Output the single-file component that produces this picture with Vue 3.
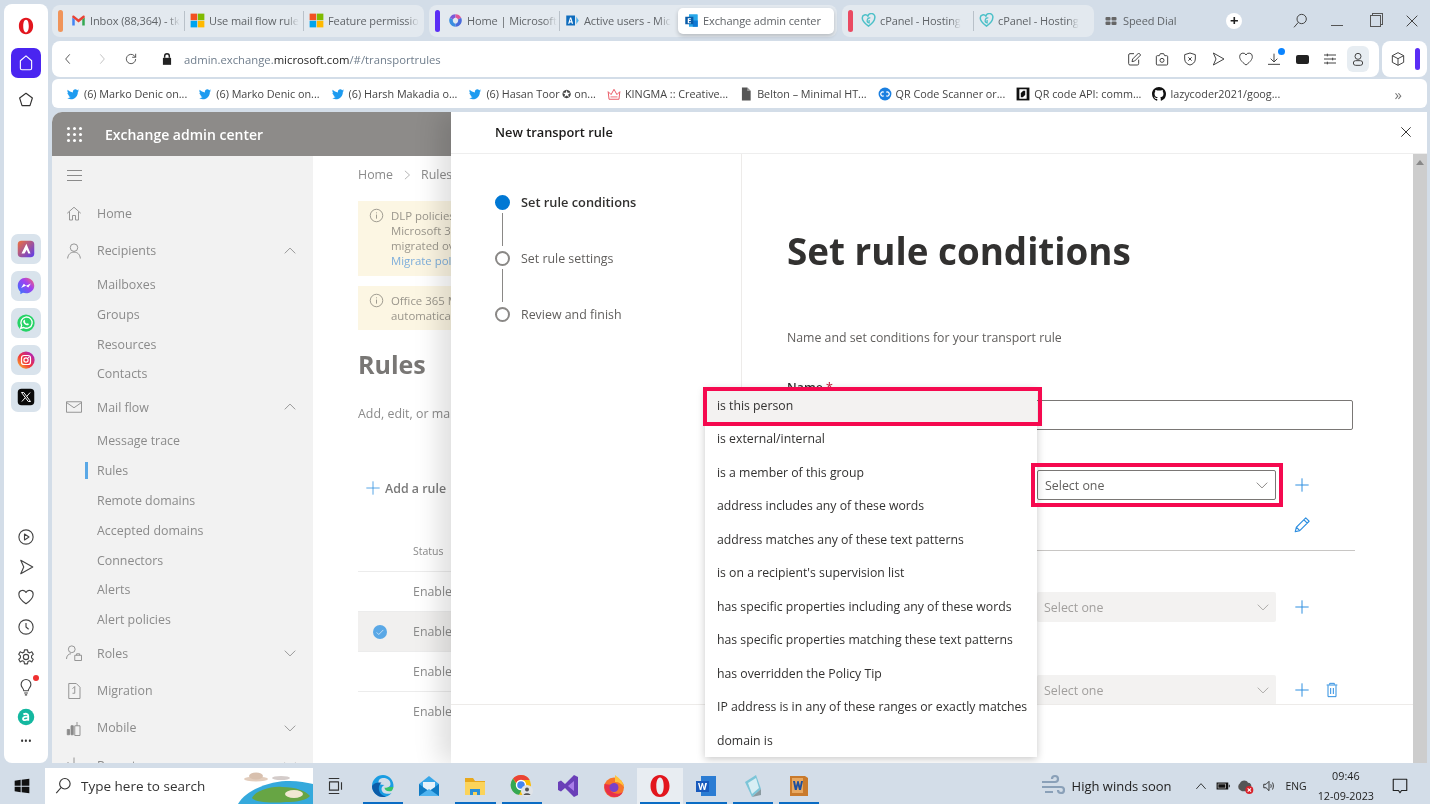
<script setup>
const icons = {
  gmail: '<path fill="#4285f4" d="M2 20V7l4 3v10z"/><path fill="#34a853" d="M18 20V10l4-3v13z"/><path fill="#ea4335" d="M6 10 2 7V5.500C2 4 4 3.500 5 4.300L12 10l7-5.700C20 3.500 22 4 22 5.500V7l-10 8z"/>',
  ms: '<path fill="#f25022" d="M1 1h10.500v10.500H1z"/><path fill="#7fba00" d="M12.500 1H23v10.500H12.500z"/><path fill="#00a4ef" d="M1 12.500h10.500V23H1z"/><path fill="#ffb900" d="M12.500 12.500H23V23H12.500z"/>',
  m365: '<path fill="#7a5ad8" d="M12 2a10 10 0 0 0-9 5.500l5 3A5 5 0 0 1 12 7z"/><path fill="#3b8ee0" d="M3 7.500A10 10 0 0 0 12 22v-5a5 5 0 0 1-4-6.500z"/><path fill="#e0569a" d="M12 2a10 10 0 0 1 9 5.500l-5 3A5 5 0 0 0 12 7z"/><path fill="#4a6bdc" d="M21 7.500A10 10 0 0 1 12 22v-5a5 5 0 0 0 4-6.500z"/>',
  azure: '<path fill="#0f6cbd" d="M2 4h14v16H2z"/><path fill="#fff" d="M8 7h2l3 10h-2l-.6-2H7.600L7 17H5zm0 6h2l-1-3.500z"/><path fill="#50b0e8" d="M18 6l4 6-4 6z"/>',
  exchange: '<path fill="#28a8ea" d="M8 2h13a1 1 0 0 1 1 1v18a1 1 0 0 1-1 1H8z"/><path fill="#0f78d4" d="M14 12h8v10h-8z"/><path fill="#0a5ca8" d="M2 6h13v12H2z"/><path fill="#fff" d="M6 8.500h5v1.500H8v1.300h2.800v1.400H8V15h3.200v1.400H6z"/>',
  cpanel: '<path fill="none" stroke="#4cc0c8" stroke-width="2.400" d="M12 21C5 16 2 12 2 8a5 5 0 0 1 9-3 5.500 5.500 0 0 1 11 3c0 4-3 8-10 13z"/><path fill="none" stroke="#4cc0c8" stroke-width="2" d="M15 8a4 4 0 1 0-2 8V11"/>',
  speed: '<rect x="1" y="4" width="10" height="7" rx="2"/><rect x="13" y="4" width="10" height="7" rx="2"/><rect x="1" y="13" width="10" height="7" rx="2"/><rect x="13" y="13" width="10" height="7" rx="2"/>',
  twitter: '<path fill="#1d9bf0" d="M22.460 6c-.770.350-1.600.580-2.460.690.880-.530 1.560-1.370 1.880-2.380-.830.500-1.750.850-2.720 1.050C18.370 4.500 17.260 4 16 4c-2.350 0-4.270 1.920-4.270 4.290 0 .340.040.670.110.980C8.280 9.090 5.110 7.380 3 4.790c-.370.630-.580 1.370-.580 2.150 0 1.490.750 2.810 1.910 3.560-.710 0-1.370-.200-1.950-.500v.030c0 2.080 1.480 3.820 3.440 4.210a4.220 4.220 0 0 1-1.930.070 4.280 4.280 0 0 0 4 2.980 8.520 8.520 0 0 1-5.330 1.840c-.340 0-.680-.020-1.020-.060C3.440 20.290 5.700 21 8.120 21 16 21 20.330 14.460 20.330 8.790c0-.190 0-.370-.010-.560.840-.600 1.560-1.360 2.140-2.230z"/>',
  kingma: '<path fill="none" stroke="#e8505b" stroke-width="1.600" d="M2 8l5 5 5-9 5 9 5-5-1.500 13h-17z"/><path fill="none" stroke="#e8505b" stroke-width="1.400" d="M6 17h12"/>',
  file: '<path fill="#555" d="M5 1h9l6 6v16H5z"/><path fill="#999" d="M14 1l6 6h-6z"/>',
  qr: '<circle cx="12" cy="12" r="11" fill="#1a7fe0"/><path fill="none" stroke="#fff" stroke-width="2.200" d="M10 9a3.500 3.500 0 1 0 0 6M14 9a3.500 3.500 0 1 1 0 6"/>',
  qrapi: '<rect x="1" y="1" width="22" height="22" fill="#111"/><path fill="none" stroke="#fff" stroke-width="2.500" d="M7 5h10v14H7zM12 5 7 10M17 14l-5 5"/>',
  github: '<path fill="#111" transform="scale(1.500)" d="M8 0C3.580 0 0 3.580 0 8c0 3.540 2.290 6.530 5.470 7.590.400.070.550-.170.550-.380 0-.190-.010-.820-.010-1.490-2.010.370-2.530-.490-2.690-.940-.090-.230-.480-.940-.820-1.130-.280-.150-.680-.520-.010-.530.630-.010 1.080.580 1.230.820.720 1.210 1.870.870 2.330.660.070-.520.280-.870.510-1.070-1.780-.200-3.640-.890-3.640-3.950 0-.870.310-1.590.820-2.150-.080-.200-.360-1.020.080-2.120 0 0 .670-.210 2.200.820.640-.180 1.320-.270 2-.270s1.360.090 2 .270c1.530-1.040 2.200-.820 2.200-.820.440 1.100.160 1.920.080 2.120.510.560.820 1.270.82 2.150 0 3.070-1.870 3.750-3.650 3.950.290.250.540.730.540 1.480 0 1.070-.010 1.930-.010 2.200 0 .210.150.460.550.380A8.010 8.010 0 0 0 16 8c0-4.420-3.580-8-8-8z"/>',
  // browser toolbar
  note: '<path d="M19 13v6a2 2 0 0 1-2 2H6a2 2 0 0 1-2-2V6a2 2 0 0 1 2-2h6M9 16l1-4 9-9 3 3-9 9z"/>',
  camera: '<path d="M5 7h3l1.500-3h5L16 7h3a1.500 1.500 0 0 1 1.500 1.500v11A1.500 1.500 0 0 1 19 21H5a1.500 1.500 0 0 1-1.500-1.500v-11A1.500 1.500 0 0 1 5 7z"/><circle cx="12" cy="14" r="3"/>',
  shieldx: '<path d="M12 3l8 2.500V12c0 5-4 8-8 9-4-1-8-4-8-9V5.500zM9.500 9.500l5 5M14.500 9.500l-5 5"/>',
  send: '<path d="M5 3l16 9-16 9 4-9z"/>',
  heart: '<path d="M12 21C5 16 2.500 12 2.500 8.500A5 5 0 0 1 12 6a5 5 0 0 1 9.500 2.500C21.500 12 19 16 12 21z"/>',
  download: '<path d="M12 4v12M7 11.500l5 5 5-5M3 20h18"/>',
  sliders: '<path d="M3 6h18M3 12h18M3 18h18M8 4v4M16 10v4M8 16v4"/>',
  person: '<circle cx="12" cy="8" r="4.500"/><rect x="5" y="14.500" width="14" height="7" rx="3.500"/>',
  cube: '<path d="M12 2.500l8.500 4.500v10L12 21.500 3.500 17V7zM3.500 7l8.500 4.500L20.500 7M12 11.500v10"/>',
  // opera rail
  house: '<path d="M12 2.500l7.500 6.500v10a2 2 0 0 1-2 2h-11a2 2 0 0 1-2-2V9z"/>',
  star: '<path d="M12 3l8.500 6.300-3.200 10.200H6.700L3.500 9.300z"/>',
  play: '<circle cx="12" cy="12" r="9.500"/><path d="M10 8l6 4-6 4z"/>',
  clock: '<circle cx="12" cy="12" r="9.500"/><path d="M12 6.500V12l3.500 3"/>',
  gear: '<circle cx="12" cy="12" r="3.500"/><path d="M10 2.500h4l.600 3 2.400 1 2.700-1.500 2 3.500-2.300 2v2.600l2.300 2-2 3.500-2.700-1.500-2.400 1-.600 3h-4l-.600-3-2.400-1-2.700 1.500-2-3.500 2.300-2v-2.600l-2.300-2 2-3.500L7 6.500l2.400-1z"/>',
  bulb: '<path d="M9 17c0-3-3.500-4.500-3.500-8.500a6.500 6.500 0 0 1 13 0C18.500 12.500 15 14 15 17zM9.500 20h5M10.500 22.500h3"/>',
  // exchange nav
  home: '<path d="M3 11l9-8 9 8M6 9v11h4v-6h4v6h4V9"/>',
  user: '<circle cx="12" cy="7.500" r="5"/><path d="M3.500 22c.500-5.500 4-8.500 8.500-8.500s8 3 8.500 8.500"/>',
  mail: '<rect x="2" y="5" width="20" height="14"/><path d="M2 6l10 7 10-7"/>',
  roles: '<circle cx="9" cy="7" r="4.500"/><path d="M2 20c0-4 2.500-7 6-7M13 15h9v7h-9zM15.500 15v-2h4v2"/>',
  migrate: '<path d="M5 2h10l5 5v15H5zM13 6v9M10 9l3-3M13 15l-3 0"/>',
  mobile: '<path d="M13 9h7v13h-7zM16 4v5"/><path fill="currentColor" d="M3 14h3v7H3zM8 9h3v12H8z"/>',
  reports: '<path d="M4 22V8M12 22V2M20 22v-9"/>',
  close: '<path d="M4 4l16 16M20 4L4 20"/>',
  plus: '<path d="M12 2v20M2 12h20"/>',
  pencil: '<path d="M3 21l1.500-6L17 2.500l4.500 4.500L9 19.500zM14.500 5l4.500 4.500M4.500 15l4.500 4.500"/>',
  trash: '<path d="M8.500 4V2h7v2M4 4.500h16M6 5v17h12V5M10 9v9M14 9v9"/>',
  chevD: '<path d="M3 8l9 9 9-9"/>',
  chevU: '<path d="M3 16l9-9 9 9"/>',
  info: '<circle cx="12" cy="12" r="10"/><path d="M12 10.500V17M12 7v1.500"/>',
  // opera rail, colour tiles
  aria: '<defs><linearGradient id="ar" x1="0" y1="0" x2="1" y2="1"><stop offset="0" stop-color="#f0703a"/><stop offset="1" stop-color="#5a3af0"/></linearGradient></defs><rect x="1" y="1" width="22" height="22" rx="5" fill="url(#ar)"/><path fill="#fff" d="M12.500 5l5.500 13h-3l-2-5-3 5H6z"/>',
  messenger: '<defs><linearGradient id="me" x1="0" y1="1" x2="1" y2="0"><stop offset="0" stop-color="#2a7bff"/><stop offset=".6" stop-color="#a040f0"/><stop offset="1" stop-color="#ff6a68"/></linearGradient></defs><path fill="url(#me)" d="M12 1C5.800 1 1 5.500 1 11.600c0 3.200 1.300 6 3.500 7.900V23l3.400-1.900c1.300.400 2.700.600 4.100.600 6.200 0 11-4.500 11-10.100S18.200 1 12 1z"/><path fill="#fff" d="M5.500 14.500l3.500-5.500 3.300 2.500L18.500 8.500 15 14l-3.300-2.500z"/>',
  whatsapp: '<circle cx="12" cy="12" r="11.500" fill="#25d366"/><path fill="none" stroke="#fff" stroke-width="1.800" d="M5 19l1.200-3.800A7.500 7.500 0 1 1 9 18z"/><path fill="#fff" d="M9.300 8c.500-.400 1-.300 1.200.200l.500 1.300-.600.900c.600 1.200 1.500 2 2.800 2.700l.900-.800 1.400.700c.400.300.300.800 0 1.200-.800.900-2 1-3.500.300-2-1-3.300-2.400-3.700-4-.200-.900 0-1.600.500-2z"/>',
  instagram: '<defs><linearGradient id="ig" x1="0" y1="1" x2="1" y2="0"><stop offset="0" stop-color="#fdc12a"/><stop offset=".45" stop-color="#f0323c"/><stop offset="1" stop-color="#a020d8"/></linearGradient></defs><circle cx="12" cy="12" r="11.500" fill="url(#ig)"/><rect x="6" y="6" width="12" height="12" rx="3.500" fill="none" stroke="#fff" stroke-width="1.600"/><circle cx="12" cy="12" r="2.800" fill="none" stroke="#fff" stroke-width="1.600"/><circle cx="15.500" cy="8.500" r=".8" fill="#fff"/>',
  xlogo: '<rect x="1" y="1" width="22" height="22" rx="5" fill="#0a0a0a"/><path fill="none" stroke="#fff" stroke-width="1.300" d="M6 6h3l9 12h-3zM17.500 6L13 11.200M11 13l-4.500 5"/>',
  aicon: '<circle cx="12" cy="12" r="11" fill="#14b8a0"/><path fill="none" stroke="#fff" stroke-width="2.400" d="M8.500 8.500c3-1.500 6.500-1 6.500 2v6.500M15 12c-3-.800-7-.500-7 2.300 0 2.600 5 2.600 7 0"/>',
  // taskbar
  windows: '<path fill="#111" d="M1 4l9-1.300v8.800H1zM11.500 2.500L23 1v10.500H11.500zM1 13h9v8.300L1 20zM11.500 13H23v10l-11.500-1.500z"/>',
  search: '<circle cx="14.500" cy="9" r="7"/><path d="M9.500 14L3 21.500"/>',
  taskview: '<path d="M5 2h14M5 22h14M6 6.500h12v11H6zM22 7v10"/>',
  edge: '<path fill="#1b9de2" d="M12 1a11 11 0 0 0-11 11c0 6 5 11 11 11 3.500 0 6.500-1.500 8.500-4-4 2-10 .500-10-4 0-2 1-3 3-4-4 0-6-1-6-2.500C7.500 5 10 4 12.500 4c4 0 7 2.500 7 6 0 1.500-1 2.500-2 3h5C23 6 18 1 12 1z"/><path fill="#36c46a" d="M22.500 13h-5c-1 .5-3 1-4 .500 0 3 3 4.500 7 3.500 1-1 1.700-2.500 2-4z"/><path fill="#0c5ca8" d="M1 12c0 6 5 11 11 11 1 0 2-.100 3-.500-5-1-8-5-7-10 .500-2 1.500-3 2.500-4C6 8 3 9 1 12z"/>',
  envelope: '<path fill="#0f7bc4" d="M2 10h20v12H2z"/><path fill="#37a6e8" d="M2 10l10-8 10 8-10 7z"/><path fill="#e6f2fa" d="M6 8h12v5l-6 4-6-4z"/><path fill="#50b4f0" d="M2 22l10-7 10 7z"/>',
  folder: '<path fill="#e8a81c" d="M2 4h8l2 3h10v14H2z"/><path fill="#fbd35a" d="M2 8h20v13H2z"/><path fill="#2a8fd8" d="M7 21v-6h10v6h-3v-3h-4v3z"/>',
  chrome: '<circle cx="11" cy="11" r="10" fill="#fbbc05"/><path fill="#ea4335" d="M11 1a10 10 0 0 1 8.700 5H11a5 5 0 0 0-4.600 3L3 4.500A10 10 0 0 1 11 1z"/><path fill="#34a853" d="M3 4.500L7 11a4.500 4.500 0 0 0 5 4l-3 5.800A10 10 0 0 1 3 4.500z"/><circle cx="11" cy="11" r="4.500" fill="#4285f4" stroke="#fff" stroke-width="1.400"/><circle cx="17" cy="17" r="6" fill="#dfe3e8"/><circle cx="17" cy="15.500" r="2" fill="#555"/><path fill="#555" d="M13.500 21c.5-2.500 6.500-2.500 7 0z"/>',
  vs: '<path fill="#6a3fb8" d="M2 8l3-1.500 4 3.500L18 1l4 2v18l-4 2-9-9-4 3.500L2 16z"/><path fill="#a97ce8" d="M18 7l-6 5 6 5z"/>',
  firefox: '<circle cx="12" cy="13.500" r="10" fill="#f7762a"/><path fill="#ffc43a" d="M13 1c4 3 8 6 9 12-2-3-5-5-9-5z"/><path fill="#e8304a" d="M2.500 10c-1 6 3 13 10 13 4 0 7-2 8.500-5-4 3-9 2-12-1-1-3 0-5 1-6z"/><circle cx="12" cy="13.500" r="4.500" fill="#7a40c8"/>',
  opera: '<path fill="#e2161e" fill-rule="evenodd" d="M12 1C6 1 2.500 6 2.500 12S6 23 12 23s9.500-5 9.500-11S18 1 12 1zm0 2.500c2.400 0 3.700 3.800 3.700 8.500s-1.300 8.500-3.700 8.500-3.700-3.800-3.700-8.500S9.600 3.500 12 3.500z"/>',
  word: '<path fill="#2b7cd3" d="M7 2h15v20H7z"/><path fill="#185abd" d="M2 7h13v11H2z"/><path fill="#fff" d="M4 9h1.500l1 5 1.200-5h1.300l1.200 5 1-5H13l-1.800 7h-1.500L8.500 11l-1.200 5H5.800z"/>',
  notepad: '<path fill="#7cc5d8" d="M4 8L15 1l5 14-9 8z"/><path fill="#d8eef4" d="M7 9l8-5 3 10-7 6z"/><path fill="#8a9aa0" d="M11 23l9-8v6z"/>',
  wordold: '<path fill="#c97a2c" d="M3 2h15l3 2v18H3z"/><path fill="#e8a860" d="M5 4h11v15H5z"/><path fill="#1d4fa0" d="M6 7h2l1 5 1.400-5h1.200L13 12l1-5h2l-2 9h-2l-1.100-4.500L9.800 16h-2z"/>',
  wind: '<path fill="none" stroke="#8aa0b8" stroke-width="2.200" d="M1 8h13a3 3 0 1 0-3-3M1 13h19a3 3 0 1 1-3 3M4 18h8"/>',
  caret: '<path d="M4 17l8-9 8 9"/>',
  battery: '<path fill="#111" d="M1 6h20v12H1z"/><path fill="#111" d="M22 10h1.500v4H22z"/><path fill="#ddd" d="M3 8h14v8H3z"/><path fill="#111" d="M4 9h12v6H4z"/>',
  network: '<path fill="#555" d="M3 18a6 6 0 0 1 0-10c1-5 10-6 12-1 4 0 5 3 5 5l-6 8H6z"/><circle cx="17" cy="18" r="6" fill="#d8242c"/><path stroke="#fff" stroke-width="1.600" d="M14.500 15.500l5 5M19.500 15.500l-5 5"/>',
  speaker: '<path d="M3 9h4l5-5v16l-5-5H3zM15 9c1 2 1 4 0 6M18 6c2 4 2 8 0 12"/>',
  notify: '<path d="M3 3h18v15h-7l-2 3-2-3H3z"/>',
}

// labels stop where the tab fades them out
const tabGroups = [
  { bar: '#f0945a', width: 372, tabs: [
    { icon: 'gmail', label: 'Inbox (88,364) - tk', width: 114, sep: true },
    { icon: 'ms', label: 'Use mail flow rule', width: 114, sep: true },
    { icon: 'ms', label: 'Feature permissio', width: 110 },
  ] },
  { bar: '#5a2df5', width: 408, tabs: [
    { icon: 'm365', label: 'Home | Microsoft', width: 112, sep: true },
    { icon: 'azure', label: 'Active users - Mic', width: 113 },
    { icon: 'exchange', label: 'Exchange admin center', width: 156, active: true },
  ] },
  { bar: '#ea4a62', width: 252, tabs: [
    { icon: 'cpanel', label: 'cPanel - Hosting', width: 113, sep: true },
    { icon: 'cpanel', label: 'cPanel - Hosting', width: 100 },
  ] },
]

const toolbar = ['note', 'camera', 'shieldx', 'send', 'heart', 'download', 'cup', 'sliders', 'person']

const bookmarks = [
  { icon: 'twitter', label: '(6) Marko Denic on...' },
  { icon: 'twitter', label: '(6) Marko Denic on...' },
  { icon: 'twitter', label: '(6) Harsh Makadia o...' },
  { icon: 'twitter', label: '(6) Hasan Toor ✪ on...' },
  { icon: 'kingma', label: 'KINGMA :: Creative...' },
  { icon: 'file', label: 'Belton – Minimal HT...' },
  { icon: 'qr', label: 'QR Code Scanner or...' },
  { icon: 'qrapi', label: 'QR code API: comm...' },
  { icon: 'github', label: 'lazycoder2021/goog...' },
]

const railApps = ['aria', 'messenger', 'whatsapp', 'instagram', 'xlogo']
const railTools = ['play', 'send', 'heart', 'clock', 'gear']

const nav = [
  { icon: 'home', label: 'Home' },
  { icon: 'user', label: 'Recipients', chev: 'chevU' },
  { sub: 'Mailboxes' }, { sub: 'Groups' }, { sub: 'Resources' }, { sub: 'Contacts' },
  { icon: 'mail', label: 'Mail flow', chev: 'chevU' },
  { sub: 'Message trace' }, { sub: 'Rules', current: true }, { sub: 'Remote domains' },
  { sub: 'Accepted domains' }, { sub: 'Connectors' }, { sub: 'Alerts' }, { sub: 'Alert policies' },
  { icon: 'roles', label: 'Roles', chev: 'chevD' },
  { icon: 'migrate', label: 'Migration' },
  { icon: 'mobile', label: 'Mobile', chev: 'chevD' },
  { icon: 'reports', label: 'Reports', chev: 'chevD' },
]

const steps = [
  { label: 'Set rule conditions', done: true },
  { label: 'Set rule settings' },
  { label: 'Review and finish' },
]

const options = [
  'is this person',
  'is external/internal',
  'is a member of this group',
  'address includes any of these words',
  'address matches any of these text patterns',
  "is on a recipient's supervision list",
  'has specific properties including any of these words',
  'has specific properties matching these text patterns',
  'has overridden the Policy Tip',
  'IP address is in any of these ranges or exactly matches',
  'domain is',
]

const taskApps = [
  { icon: 'edge', open: true }, { icon: 'envelope' }, { icon: 'folder', open: true }, { icon: 'chrome', open: true },
  { icon: 'vs' }, { icon: 'firefox' }, { icon: 'opera', open: true, active: true }, { icon: 'word', open: true },
  { icon: 'notepad', open: true }, { icon: 'wordold', open: true },
]
</script>

<template>
  <div class="screen">
    <div class="top">
      <aside class="rail">
        <svg class="ic s18 logo" viewBox="0 0 24 24" v-html="icons.opera" />
        <div class="rail-home"><svg class="ic s18 line white" viewBox="0 0 24 24" v-html="icons.house" /></div>
        <svg class="ic s18 line rail-star" viewBox="0 0 24 24" v-html="icons.star" />
        <div class="rail-apps">
          <div v-for="a in railApps" :key="a" class="app-tile"><svg class="ic s18" viewBox="0 0 24 24" v-html="icons[a]" /></div>
        </div>
        <div class="rail-tools">
          <svg v-for="t in railTools" :key="t" class="ic s18 line" viewBox="0 0 24 24" v-html="icons[t]" />
          <div class="bulb"><svg class="ic s18 line" viewBox="0 0 24 24" v-html="icons.bulb" /><span class="red-dot" /></div>
          <svg class="ic s18" viewBox="0 0 24 24" v-html="icons.aicon" />
          <div class="dots">•••</div>
        </div>
      </aside>

      <div class="browser">
        <div class="tabstrip">
          <div v-for="g in tabGroups" :key="g.bar" class="tabgroup" :style="{ width: g.width + 'px' }">
            <span class="tabbar" :style="{ background: g.bar }" />
            <div v-for="t in g.tabs" :key="t.label + t.width" class="tab" :class="{ active: t.active, sep: t.sep }" :style="{ width: t.width + 'px' }">
              <svg class="ic s15" viewBox="0 0 24 24" v-html="icons[t.icon]" />
              <span class="tabtext">{{ t.label }}</span>
            </div>
          </div>
          <div class="speed">
            <svg class="ic s12 grey-fill" viewBox="0 0 24 24" v-html="icons.speed" />
            <span>Speed Dial</span>
          </div>
          <div class="newtab">+</div>
          <div class="winctl">
            <svg class="ic s16 line" viewBox="0 0 24 24" v-html="icons.search" />
            <span class="minimize" />
            <span class="restore" />
            <svg class="ic s16 line" viewBox="0 0 24 24" v-html="icons.close" />
          </div>
        </div>

        <div class="addrrow">
          <div class="addr">
            <svg class="ic s14 line" viewBox="0 0 24 24"><path d="M15 4l-7 8 7 8" /></svg>
            <svg class="ic s14 line faded fwd" viewBox="0 0 24 24"><path d="M9 4l7 8-7 8" /></svg>
            <svg class="ic s14 line reload" viewBox="0 0 24 24"><path d="M20 12a8 8 0 1 1-2.500-5.800L20 9M20 3v6h-6" /></svg>
            <svg class="ic s14 lock" viewBox="0 0 24 24"><path fill="#222" d="M5 10h14v12H5z" /><path fill="none" stroke="#222" stroke-width="2.500" d="M8 10V7a4 4 0 0 1 8 0v3" /></svg>
            <div class="url">admin.exchange.<b>microsoft.com</b>/#/transportrules</div>
            <div class="tools">
              <div v-for="t in toolbar" :key="t" class="tool" :class="{ on: t === 'person' }">
                <span v-if="t === 'cup'" class="cup" />
                <svg v-else class="ic s16 line" viewBox="0 0 24 24" v-html="icons[t]" />
                <span v-if="t === 'download'" class="blue-dot" />
              </div>
            </div>
          </div>
          <div class="addr-side">
            <svg class="ic s16 line" viewBox="0 0 24 24" v-html="icons.cube" />
            <span class="sidebar-pill" />
          </div>
        </div>

        <div class="bookmarks">
          <div v-for="b in bookmarks" :key="b.label + b.icon" class="bm">
            <svg class="ic s14" viewBox="0 0 24 24" v-html="icons[b.icon]" />
            <span>{{ b.label }}</span>
          </div>
          <span class="more">»</span>
        </div>

        <div class="page">
          <header class="eac-head">
            <span class="waffle"><i v-for="n in 9" :key="n" /></span>
            <span class="eac-title">Exchange admin center</span>
          </header>
          <div class="eac-body">
            <nav class="eac-nav">
              <div class="hamb"><i /><i /><i /></div>
              <template v-for="n in nav" :key="n.label || n.sub">
                <div v-if="n.sub" class="nav-sub">
                  <span v-if="n.current" class="nav-mark" />{{ n.sub }}
                </div>
                <div v-else class="nav-top">
                  <svg class="ic s18 line thin" viewBox="0 0 24 24" v-html="icons[n.icon]" />
                  <span class="nav-label">{{ n.label }}</span>
                  <svg v-if="n.chev" class="ic s14 line" viewBox="0 0 24 24" v-html="icons[n.chev]" />
                </div>
              </template>
            </nav>
            <main class="eac-main">
              <div class="crumbs">Home <svg class="ic s10 line" viewBox="0 0 24 24"><path d="M7 2l11 10L7 22" /></svg> Rules</div>
              <div class="notice n1">
                <svg class="ic s15 line" viewBox="0 0 24 24" v-html="icons.info" />
                <p>DLP policies are moving<br>Microsoft 365 compliance<br>migrated over to the new<br><a>Migrate policies</a></p>
              </div>
              <div class="notice n2">
                <svg class="ic s15 line" viewBox="0 0 24 24" v-html="icons.info" />
                <p>Office 365 Message<br>automatically applied</p>
              </div>
              <h2 class="rules-title">Rules</h2>
              <p class="rules-sub">Add, edit, or manage your rules</p>
              <div class="cmdbar">
                <svg class="ic s16 line blue thin" viewBox="0 0 24 24" v-html="icons.plus" />
                <span>Add a rule</span>
              </div>
              <div class="thead">Status</div>
              <div class="trow">Enabled</div>
              <div class="trow picked">
                <span class="tick"><svg class="ic s10 line white" viewBox="0 0 24 24"><path d="M4 13l5 5L20 7" /></svg></span>
                Enabled
              </div>
              <div class="trow">Enabled</div>
              <div class="trow">Enabled</div>
            </main>
          </div>

          <!-- flyout panel over the dimmed page -->
          <section class="panel">
            <header class="panel-head">
              <span>New transport rule</span>
              <svg class="ic s14 line" viewBox="0 0 24 24" v-html="icons.close" />
            </header>
            <div class="panel-rest">
              <div class="panel-col">
                <div class="panel-body">
                  <div class="steps">
                    <template v-for="(s, i) in steps" :key="s.label">
                      <div class="step" :class="{ done: s.done }"><span class="dot" />{{ s.label }}</div>
                      <span v-if="i < steps.length - 1" class="step-line" />
                    </template>
                  </div>
                  <div class="form">
                    <h1>Set rule conditions</h1>
                    <p class="lead">Name and set conditions for your transport rule</p>
                    <label class="field-label">Name <em>*</em></label>
                    <div class="textbox" />
                    <div class="cond first">
                      <div class="select">
                        <span>Select one</span>
                        <svg class="ic s14 line" viewBox="0 0 24 24" v-html="icons.chevD" />
                        <span class="pink-frame" />
                      </div>
                      <svg class="ic s16 line blue" viewBox="0 0 24 24" v-html="icons.plus" />
                    </div>
                    <div class="pencil-row"><svg class="ic s18 line blue" viewBox="0 0 24 24" v-html="icons.pencil" /></div>
                    <div class="rule-line" />
                    <div class="cond second">
                      <div class="select off">
                        <span>Select one</span>
                        <svg class="ic s14 line" viewBox="0 0 24 24" v-html="icons.chevD" />
                      </div>
                      <svg class="ic s16 line blue" viewBox="0 0 24 24" v-html="icons.plus" />
                    </div>
                    <div class="cond third">
                      <div class="select off">
                        <span>Select one</span>
                        <svg class="ic s14 line" viewBox="0 0 24 24" v-html="icons.chevD" />
                      </div>
                      <svg class="ic s16 line blue" viewBox="0 0 24 24" v-html="icons.plus" />
                      <svg class="ic s16 line blue" viewBox="0 0 24 24" v-html="icons.trash" />
                    </div>
                  </div>
                </div>
                <div class="panel-foot" />
              </div>
              <div class="scrollbar"><svg class="scroll-arrow" viewBox="0 0 10 6"><path d="M5 0l5 6H0z" /></svg></div>
            </div>

            <ul class="dropdown">
              <li v-for="(o, i) in options" :key="o" :class="{ hover: i === 0 }">{{ o }}</li>
              <span class="pink-frame opt" />
            </ul>
          </section>
        </div>
      </div>
    </div>

    <footer class="taskbar">
      <svg class="ic s16 win" viewBox="0 0 24 24" v-html="icons.windows" />
      <div class="searchbox">
        <svg class="ic s18 line" viewBox="0 0 24 24" v-html="icons.search" />
        <span>Type here to search</span>
        <svg class="island" viewBox="0 0 75 36">
          <ellipse cx="18" cy="11" rx="12" ry="2.500" fill="#e2cdbd" />
          <ellipse cx="18" cy="8" rx="7" ry="3.500" fill="#d8c0ae" />
          <ellipse cx="43" cy="10" rx="9" ry="2" fill="#d4ccca" />
          <path d="M0 36C8 22 30 14 48 13c10-.5 20 1 27 3v20z" fill="#35a9dc" />
          <path d="M14 30c4-8 20-12 30-11 14 0 24 4 28 9-4 4-12 6-24 6-12 1-30 1-34-4z" fill="#67a544" />
          <ellipse cx="56" cy="26" rx="9" ry="4" fill="#f0e8d2" />
        </svg>
      </div>
      <svg class="ic s18 line taskview" viewBox="0 0 24 24" v-html="icons.taskview" />
      <div class="apps">
        <div v-for="a in taskApps" :key="a.icon" class="task" :class="{ open: a.open, on: a.active }">
          <svg class="ic s24" viewBox="0 0 24 24" v-html="icons[a.icon]" />
        </div>
      </div>
      <div class="tray">
        <svg class="ic s24" viewBox="0 0 24 24" v-html="icons.wind" />
        <span class="weather">High winds soon</span>
        <svg class="ic s14 line" viewBox="0 0 24 24" v-html="icons.caret" />
        <svg class="ic s14" viewBox="0 0 24 24" v-html="icons.battery" />
        <svg class="ic s16" viewBox="0 0 24 24" v-html="icons.network" />
        <svg class="ic s14 line" viewBox="0 0 24 24" v-html="icons.speaker" />
        <span class="lang">ENG</span>
        <div class="clock"><span>09:46</span><span>12-09-2023</span></div>
        <svg class="ic s18 line notify" viewBox="0 0 24 24" v-html="icons.notify" />
      </div>
    </footer>
  </div>
</template>

<style>
html, body { margin: 0; background: #d3dde8; overflow: hidden; }
</style>

<style scoped>
.screen {
  width: 1430px;
  height: 804px;
  display: flex;
  flex-direction: column;
  background: #d3dde8;
  font-family: "Open Sans", "Noto Sans", sans-serif;
  color: #323130;
  overflow: hidden;
  /* the reference is a slightly soft, rescaled capture */
  filter: blur(.35px);
}
.top { display: flex; height: 768px; padding: 4px 3px 5px 4px; box-sizing: border-box; gap: 4px; }

.ic { display: block; flex: none; }
.s10 { width: 10px; height: 10px; }
.s12 { width: 12px; height: 12px; }
.s14 { width: 14px; height: 14px; }
.s15 { width: 15px; height: 15px; }
.s16 { width: 16px; height: 16px; }
.s18 { width: 18px; height: 18px; }
.s24 { width: 24px; height: 24px; }
.line { fill: none; stroke: currentColor; stroke-width: 1.500; stroke-linejoin: round; }
.thin { stroke-width: 1.200; }
.white { color: #fff; }
.blue { color: #2f8fe0; }
.faded { color: #bbb; }
.grey-fill { fill: #666; }

/* opera rail */
.rail {
  width: 44px;
  flex: none;
  background: #fff;
  border-radius: 8px;
  display: flex;
  flex-direction: column;
  align-items: center;
}
.logo { margin-top: 13px; }
.rail-home {
  width: 30px; height: 30px; margin-top: 13px;
  background: #4a25f0; border-radius: 7px;
  display: flex; align-items: center; justify-content: center;
}
.rail-star { margin-top: 13px; }
.rail-apps { margin-top: 125px; display: flex; flex-direction: column; gap: 7px; }
.app-tile {
  width: 30px; height: 30px; border-radius: 7px; background: #d9e3ec;
  display: flex; align-items: center; justify-content: center;
}
.rail-tools {
  margin-top: 116px;
  display: flex; flex-direction: column; align-items: center; gap: 12px;
  color: #444;
}
.bulb { position: relative; height: 18px; }
.red-dot { position: absolute; top: -3px; right: -4px; width: 6px; height: 6px; border-radius: 50%; background: #f03030; }
.dots { font-size: 10px; line-height: 8px; color: #333; margin-top: -1px; }

/* browser chrome */
.browser { flex: 1; min-width: 0; display: flex; flex-direction: column; }
.tabstrip { display: flex; align-items: center; height: 33px; gap: 5px; font-size: 11px; letter-spacing: -.1px; color: #606468; }
.tabgroup {
  display: flex; align-items: center; height: 32px; padding-left: 6px;
  background: #e3e9ef; border-radius: 8px; box-sizing: border-box; flex: none;
}
.tabbar { width: 5px; height: 22px; border-radius: 3px; flex: none; margin-right: 8px; }
.tab {
  display: flex; align-items: center; gap: 4px; height: 26px; flex: none;
  box-sizing: border-box;
}
.tab.sep { margin-right: 5px; position: relative; }
.tab.sep::after { content: ""; position: absolute; right: 0; top: 3px; height: 20px; width: 1px; background: #b9c1c9; }
.tab.active { background: #fff; border-radius: 5px; padding-left: 6px; box-shadow: 0 2px 4px rgba(0,0,0,.2); }
.tabtext { white-space: nowrap; mask-image: linear-gradient(to right, #000 86%, transparent); }
.tab.active .tabtext { mask-image: none; }
.speed { display: flex; align-items: center; gap: 6px; margin-left: 6px; white-space: nowrap; }
.newtab {
  width: 16px; height: 16px; margin-left: 45px; border-radius: 50%; background: #fff;
  font-size: 15px; line-height: 15px; text-align: center; font-weight: 700; color: #222;
}
.winctl { display: flex; align-items: center; margin-left: 45px; gap: 23px; color: #444; }
.minimize { width: 12px; height: 1px; background: #555; margin-top: 10px; }
.restore { width: 9px; height: 10px; margin-left: 4px; border: 1px solid #555; box-shadow: 2px -2px 0 -1px #d3dde8, 2px -2px 0 0 #555; }

.addrrow { display: flex; gap: 3px; height: 36px; margin-top: 4px; }
.addr {
  flex: 1; min-width: 0; background: #fff; border-radius: 8px;
  display: flex; align-items: center; padding-left: 9px; color: #444;
}
.fwd { margin-left: 20px; }
.reload { margin-left: 15px; }
.lock { margin-left: 22px; }
.url { font-size: 11.300px; color: #6f7d8c; margin-left: 10px; white-space: nowrap; }
.url b { font-weight: 400; color: #222; }
.tools { margin-left: auto; display: flex; align-items: center; margin-right: 7px; }
.tool {
  width: 28px; height: 26px; display: flex; align-items: center; justify-content: center;
  position: relative; border-radius: 6px; color: #444;
}
.tool.on { background: #e7edf2; width: 22px; margin-left: 3px; margin-right: 3px; }
.cup { width: 13px; height: 9px; background: #222; border-radius: 2px; }
.blue-dot { position: absolute; top: 2px; right: 3px; width: 7px; height: 7px; border-radius: 50%; background: #0a84ff; }
.addr-side {
  width: 45px; background: #fff; border-radius: 8px; flex: none;
  display: flex; align-items: center; padding-left: 8px; box-sizing: border-box; gap: 9px; color: #444;
}
.sidebar-pill { width: 5px; height: 22px; border-radius: 3px; background: #5a2df5; }

.bookmarks {
  display: flex; align-items: center; height: 29px; margin-top: 2px; padding-left: 14px;
  background: #fff; border-radius: 6px; font-size: 10.800px; color: #444;
}
.bm { display: flex; align-items: center; gap: 4px; margin-right: 11px; white-space: nowrap; }
.more { margin-left: auto; margin-right: 25px; font-size: 15px; color: #777; }

/* dimmed exchange page */
.page {
  position: relative;
  flex: 1; min-height: 0; margin-top: 4px;
  border-radius: 10px 0 0 0; overflow: hidden;
  display: flex; flex-direction: column;
  background: #fff;
}
.eac-head {
  height: 44px; flex: none; background: #8d8b89; color: #fff;
  display: flex; align-items: center; padding-left: 15px;
}
.waffle { display: grid; grid-template-columns: repeat(3, 3px); gap: 3px; margin-right: 23px; }
.waffle i { width: 3px; height: 3px; background: #fff; border-radius: 50%; }
.eac-title { font-size: 14px; font-weight: 600; }
.eac-body { flex: 1; display: flex; min-height: 0; overflow: hidden; }
.eac-nav { width: 261px; flex: none; background: #f2f2f2; color: #8b8b8b; font-size: 12.400px; overflow: hidden; }
.hamb { display: flex; flex-direction: column; gap: 4px; padding: 14px 0 0 15px; height: 25px; }
.hamb i { width: 15px; height: 1px; background: #8b8b8b; }
.nav-top { height: 37.300px; display: flex; align-items: center; padding: 0 16px 0 13px; box-sizing: border-box; }
.nav-label { flex: 1; margin-left: 14px; }
.nav-sub { height: 29.800px; display: flex; align-items: center; padding-left: 45px; position: relative; }
.nav-mark { position: absolute; left: 33px; top: 6px; width: 3px; height: 17px; background: #5aa8e6; }
.eac-main { flex: 1; min-width: 0; padding: 9px 0 0 45px; color: #8b8b8b; font-size: 12.400px; overflow: hidden; }
.crumbs { display: flex; align-items: center; gap: 9px; height: 19px; white-space: nowrap; }
.notice {
  display: flex; gap: 7px; margin-top: 17px; padding: 7px 0 0 11px;
  background: #fcf6e3; height: 75px; box-sizing: border-box; white-space: nowrap;
  font-size: 11.400px; line-height: 15px; color: #9a968c;
}
.notice.n2 { height: 44px; margin-top: 10px; }
.notice p { margin: 0; }
.notice a { color: #7eaedb; }
.rules-title { margin: 16px 0 0; font-size: 25px; line-height: 36px; font-weight: 700; color: #797775; }
.rules-sub { margin: 23px 0 0; white-space: nowrap; }
.cmdbar { display: flex; align-items: center; gap: 4px; margin: 54px 0 0 7px; height: 24px; font-weight: 600; color: #7a7a7a; white-space: nowrap; }
.thead { height: 45px; margin-top: 26px; box-sizing: border-box; padding: 18px 0 0 55px; font-size: 10.500px; color: #8b8b8b; }
.trow {
  height: 40px; display: flex; align-items: center; padding-left: 55px; position: relative;
  border-top: 1px solid #ececec; box-sizing: border-box; white-space: nowrap;
}
.trow.picked { background: #f1f0ef; }
.tick {
  position: absolute; left: 15px; width: 14px; height: 14px; border-radius: 50%;
  background: #5aa8e6; display: flex; align-items: center; justify-content: center;
}

/* new transport rule panel */
.panel {
  position: absolute; left: 399px; right: 0; top: 0; bottom: 0;
  background: #fff; display: flex; flex-direction: column;
  box-shadow: -12px 0 24px rgba(0,0,0,.13);
}
.panel-head {
  height: 42px; flex: none; display: flex; align-items: center; justify-content: space-between;
  padding: 0 14px 2px 44px; box-sizing: border-box; border-bottom: 1px solid #eee;
  font-size: 12.800px; font-weight: 600; color: #1b1a19;
}
.panel-rest { flex: 1; min-height: 0; display: flex; }
.panel-col { flex: 1; min-width: 0; display: flex; flex-direction: column; }
.panel-body { flex: 1; min-height: 0; display: flex; overflow: hidden; }
.steps {
  width: 291px; flex: none; box-sizing: border-box; padding: 40px 0 0 44px;
  border-right: 1px solid #edebe9; display: flex; flex-direction: column;
}
.step { display: flex; align-items: center; gap: 11px; height: 16px; font-size: 12.400px; color: #605e5c; }
.step.done { font-size: 12.800px; font-weight: 600; color: #323130; }
.dot { width: 11px; height: 11px; border: 2px solid #8a8886; border-radius: 50%; background: #fff; flex: none; }
.done .dot { background: #0078d4; border-color: #0078d4; }
.step-line { width: 1px; height: 33px; margin: 3px 0 4px 7px; background: #8a8886; }

.form { flex: 1; min-width: 0; padding-left: 45px; }
.form h1 { margin: 73px 0 0; font-size: 36.800px; line-height: 48px; font-weight: 700; color: #323130; white-space: nowrap; }
.lead { margin: 54px 0 0; font-size: 12.300px; line-height: 18px; color: #605e5c; }
.field-label { display: block; margin-top: 32px; font-size: 12.400px; line-height: 18px; font-weight: 600; }
.field-label em { color: #c4314b; font-style: normal; }
.textbox { width: 566px; height: 30px; margin-top: 3px; box-sizing: border-box; border: 1px solid #7a7775; border-radius: 2px; }
.cond { display: flex; align-items: center; margin-left: 250px; color: #2f8fe0; }
.cond .ic + .ic { margin-left: 14px; }
.cond.first { margin-top: 40px; }
.cond.second { margin-top: 41px; }
.cond.third { margin-top: 53px; }
.select {
  position: relative; width: 239px; height: 30px; box-sizing: border-box; margin-right: 18px;
  border: 1px solid #7a7775; border-radius: 2px; background: #fff;
  display: flex; align-items: center; justify-content: space-between;
  padding: 0 6px 0 7px; font-size: 12.400px; color: #605e5c;
}
.select .ic { color: #7a7775; }
.select.off { border: 0; background: #f3f2f1; color: #a19f9d; padding-left: 7px; }
.select.off .ic { color: #a19f9d; }
.pink-frame { position: absolute; z-index: 2; left: -7px; right: -8px; top: -8px; bottom: -8px; border: 4px solid #f5094f; pointer-events: none; }
.pencil-row { margin: 16px 0 0 506px; color: #2f8fe0; }
.rule-line { width: 318px; height: 1px; margin: 16px 0 0 250px; background: #c8c6c4; }
.panel-foot { height: 58px; flex: none; border-top: 1px solid #edebe9; background: #fff; }
.scrollbar { width: 14px; flex: none; background: #cdcdcd; display: flex; justify-content: center; }
.scroll-arrow { width: 8px; height: 5px; margin-top: 6px; fill: #888; }

.dropdown {
  position: absolute; left: 254px; top: 276px; width: 332px; margin: 0; padding: 0;
  list-style: none; background: #fff; box-shadow: 0 2px 8px rgba(0,0,0,.22);
}
.dropdown li { height: 33.500px; box-sizing: border-box; padding: 1px 0 0 12px; display: flex; align-items: center; font-size: 12.260px; color: #323130; white-space: nowrap; }
.dropdown li.hover { background: #f3f2f1; }
.pink-frame.opt { left: -2px; right: -5px; top: -1px; bottom: auto; height: 39px; box-sizing: border-box; }

/* windows taskbar */
.taskbar { height: 36px; flex: none; display: flex; align-items: center; background: #d3dde8; position: relative; }
.win { margin-left: 14px; }
.searchbox {
  position: relative; width: 268px; height: 36px; margin-left: 15px; background: #fff; overflow: hidden;
  display: flex; align-items: center; gap: 9px; padding-left: 9px; box-sizing: border-box;
  font-size: 13.500px; color: #333;
}
.island { position: absolute; right: 0; top: 0; width: 75px; height: 36px; }
.taskview { margin-left: 12px; color: #333; }
.apps { display: flex; margin-left: 17px; }
.task { width: 46.200px; height: 36px; display: flex; align-items: center; justify-content: center; position: relative; }
.task.on { background: #e8edf2; }
.task.open::after { content: ""; position: absolute; left: 3px; right: 3px; bottom: 0; height: 2px; background: #0a6cc4; }
.tray { margin-left: auto; display: flex; align-items: center; color: #222; font-size: 13px; }
.weather { margin: 0 22px 0 7px; }
.tray .ic + .ic { margin-left: 8px; }
.lang { font-size: 10.400px; margin: 0 11px 0 10px; }
.clock { display: flex; flex-direction: column; align-items: center; font-size: 10.800px; line-height: 20px; margin-right: 17px; }
.notify { margin-right: 21px; }
</style>
